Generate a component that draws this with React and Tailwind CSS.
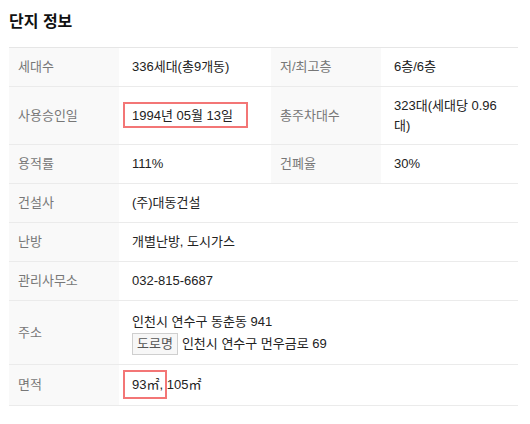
import React from 'react';

const rows = [
  { h: 'h-[39px]', cells: [['세대수', '336세대(총9개동)'], ['저/최고층', '6층/6층']] },
  { h: 'h-[58px]', cells: [['사용승인일', 'date'], ['총주차대수', '323대(세대당 0.96 대)']] },
  { h: 'h-[39px]', cells: [['용적률', '111%'], ['건폐율', '30%']] },
  { h: 'h-[39px]', cells: [['건설사', '(주)대동건설']] },
  { h: 'h-[39px]', cells: [['난방', '개별난방, 도시가스']] },
  { h: 'h-[39px]', cells: [['관리사무소', '032-815-6687']] },
  { h: 'h-[64px]', cells: [['주소', 'addr']] },
  { h: 'h-[41px]', cells: [['면적', 'area']] },
];

function Value({ v }) {
  if (v === 'date') {
    return (
      <span className="relative inline-block">
        1994년 05월 13일
        <span className="absolute -left-[9px] -top-[4px] w-[125px] h-[26px] border-2 border-[#f37676] pointer-events-none" />
      </span>
    );
  }
  if (v === 'addr') {
    return (
      <div className="leading-[22px]">
        <div>인천시 연수구 동춘동 941</div>
        <div className="flex items-center">
          <span className="inline-flex items-center h-[22px] px-[4px] mr-[4px] border border-[#cfcfcf] bg-[#f7f7f7] text-[#555] text-[13px]">도로명</span>
          인천시 연수구 먼우금로 69
        </div>
      </div>
    );
  }
  if (v === 'area') {
    return (
      <span>
        <span className="relative inline-block">
          93㎡,
          <span className="absolute -left-[9px] -right-[4px] -top-[5px] h-[29px] border-2 border-[#f37676] pointer-events-none" />
        </span>{' '}
        105㎡
      </span>
    );
  }
  return <span>{v}</span>;
}

export default function App() {
  return (
    <div className="w-[530px] h-[424px] bg-white px-[9px] pt-[10px]" style={{ fontFamily: '"Liberation Sans", "Noto Sans CJK KR", sans-serif' }}>
      <h2 className="text-[16px] leading-[24px] font-bold text-[#111] mb-[13px]">단지 정보</h2>
      <div className="w-[509px] border-t border-[#e6e6e6] text-[13px] leading-[20px]">
        {rows.map((row, i) => (
          <div key={i} className={`grid grid-cols-[110px_152px_110px_137px] border-b border-[#ebebeb] ${row.h}`}>
            {row.cells.map(([label, value], j) => (
              <React.Fragment key={j}>
                <div className="flex items-center pl-[9px] bg-[#f9f9f9] text-[#777]">{label}</div>
                <div className={`flex items-center pl-[13px] pr-[13px] text-[#222] ${row.cells.length === 1 ? 'col-span-3' : ''}`}>
                  <Value v={value} />
                </div>
              </React.Fragment>
            ))}
          </div>
        ))}
      </div>
    </div>
  );
}
